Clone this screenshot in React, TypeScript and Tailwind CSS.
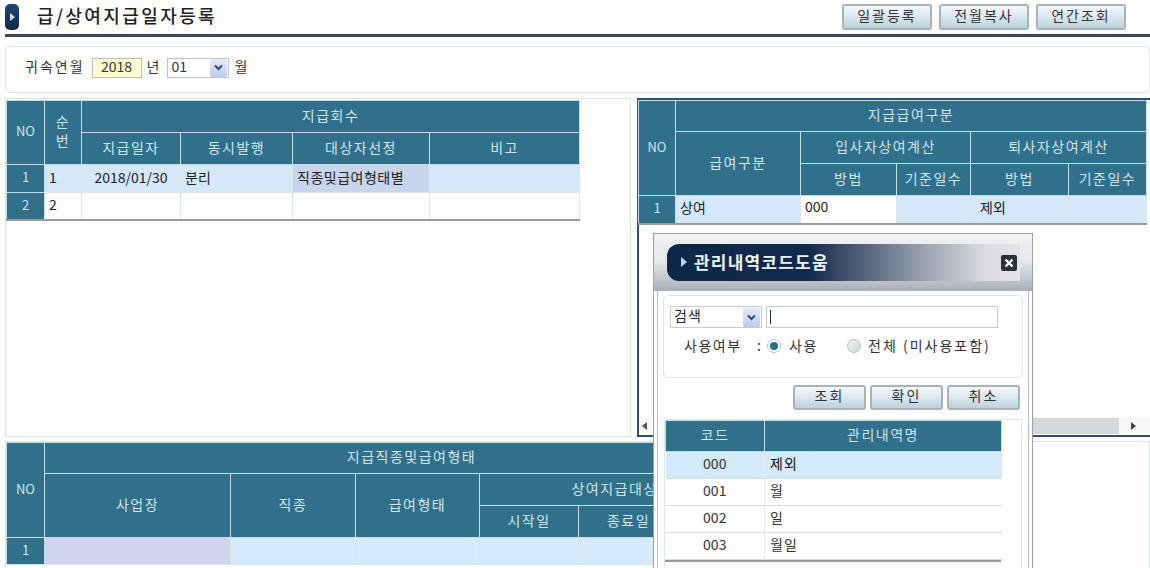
import * as React from "react"

const th = "border border-[#c5dde4] bg-[#31708b] text-center align-middle font-normal text-[#cfe6ee] p-0 pb-[3px] tracking-[1.5px] overflow-hidden whitespace-nowrap"
const thNo = "border border-[#c5dde4] bg-[#31708b] text-center align-middle font-normal text-[13px] text-[#cfe6ee] p-0 pb-[3px] overflow-hidden whitespace-nowrap"
const td = "border border-[#dfe6e6] px-1 pb-[3px] align-middle text-[#222] whitespace-nowrap overflow-hidden"
const no = "border border-[#c5dde4] bg-[#31708b] text-center text-[13px] text-[#cfe6ee] p-0 pb-[3px]"
const btn = "flex items-center justify-center rounded-[3px] border-2 border-[#a5b4bf] bg-gradient-to-b from-[#f4f8fb] via-[#dbe7ef] to-[#bdd0dc] pb-[4px] text-[#333] tracking-[2px]"

function Chevron() {
  return (
    <span className="flex h-full w-[17px] items-center justify-center rounded-[2px] bg-gradient-to-b from-[#e6eefb] to-[#b9cbee]">
      <svg width="9" height="7" viewBox="0 0 9 7">
        <path d="M1 1.5 L4.5 5 L8 1.5" fill="none" stroke="#2f4a78" strokeWidth="2" />
      </svg>
    </span>
  )
}

function PayTable() {
  return (
    <table className="table-fixed border-collapse w-[573px] mt-[1px]">
      <colgroup>
        <col className="w-[38px]" />
        <col className="w-[37px]" />
        <col className="w-[99px]" />
        <col className="w-[112px]" />
        <col className="w-[137px]" />
        <col className="w-[150px]" />
      </colgroup>
      <thead>
        <tr className="h-[32px]">
          <th rowSpan={2} className={thNo}>NO</th>
          <th rowSpan={2} className={th + " leading-[19px]"}>순<br />번</th>
          <th colSpan={4} className={th}>지급회수</th>
        </tr>
        <tr className="h-[32px]">
          <th className={th}>지급일자</th>
          <th className={th}>동시발행</th>
          <th className={th}>대상자선정</th>
          <th className={th}>비고</th>
        </tr>
      </thead>
      <tbody>
        <tr className="h-[28px] bg-[#d5e8fa]">
          <td className={no}>1</td>
          <td className={td}>1</td>
          <td className={td + " text-center"}>2018/01/30</td>
          <td className={td}>분리</td>
          <td className={td + " bg-[#c8d5ec] tracking-[0.5px]"}>직종및급여형태별</td>
          <td className={td}></td>
        </tr>
        <tr className="h-[27px] border-b-2 border-[#9a9a9a]">
          <td className={no}>2</td>
          <td className={td}>2</td>
          <td className={td}></td>
          <td className={td}></td>
          <td className={td}></td>
          <td className={td}></td>
        </tr>
      </tbody>
    </table>
  )
}

function KindTable() {
  return (
    <table className="table-fixed border-collapse w-[508px] -ml-px">
      <colgroup>
        <col className="w-[37px]" />
        <col className="w-[125px]" />
        <col className="w-[96px]" />
        <col className="w-[74px]" />
        <col className="w-[98px]" />
        <col className="w-[78px]" />
      </colgroup>
      <thead>
        <tr className="h-[31px]">
          <th rowSpan={3} className={thNo}>NO</th>
          <th colSpan={5} className={th}>지급급여구분</th>
        </tr>
        <tr className="h-[32px]">
          <th rowSpan={2} className={th}>급여구분</th>
          <th colSpan={2} className={th}>입사자상여계산</th>
          <th colSpan={2} className={th}>퇴사자상여계산</th>
        </tr>
        <tr className="h-[32px]">
          <th className={th}>방법</th>
          <th className={th}>기준일수</th>
          <th className={th}>방법</th>
          <th className={th}>기준일수</th>
        </tr>
      </thead>
      <tbody>
        <tr className="h-[28px] bg-[#d5e8fa] border-b-2 border-[#9a9a9a]">
          <td className={no}>1</td>
          <td className={td}>상여</td>
          <td className={td + " bg-white align-top"}>000</td>
          <td className={td}></td>
          <td className={td + " pl-[9px]"}>제외</td>
          <td className={td}></td>
        </tr>
      </tbody>
    </table>
  )
}

function StaffTable() {
  return (
    <table className="table-fixed border-collapse w-[772px]">
      <colgroup>
        <col className="w-[38px]" />
        <col className="w-[186px]" />
        <col className="w-[125px]" />
        <col className="w-[124px]" />
        <col className="w-[99px]" />
        <col className="w-[100px]" />
        <col className="w-[100px]" />
      </colgroup>
      <thead>
        <tr className="h-[31px]">
          <th rowSpan={3} className={thNo}>NO</th>
          <th colSpan={6} className={th}>지급직종및급여형태</th>
        </tr>
        <tr className="h-[32px]">
          <th rowSpan={2} className={th}>사업장</th>
          <th rowSpan={2} className={th}>직종</th>
          <th rowSpan={2} className={th}>급여형태</th>
          <th colSpan={3} className={th}>상여지급대상기간</th>
        </tr>
        <tr className="h-[32px]">
          <th className={th}>시작일</th>
          <th className={th}>종료일</th>
          <th className={th}></th>
        </tr>
      </thead>
      <tbody>
        <tr className="h-[27px] bg-[#d5ebfb]">
          <td className={no}>1</td>
          <td className={td + " bg-[#cdd6ee]"}></td>
          <td className={td}></td>
          <td className={td}></td>
          <td className={td}></td>
          <td className={td}></td>
          <td className={td}></td>
        </tr>
      </tbody>
    </table>
  )
}

function CodeDialog() {
  const rows = [
    { code: "000", name: "제외" },
    { code: "001", name: "월" },
    { code: "002", name: "일" },
    { code: "003", name: "월일" },
  ]
  return (
    <div className="absolute left-[653px] top-[233px] h-[345px] w-[380px] border border-[#9aa3ab] bg-[#fdfefd]">
      {/* title area */}
      <div className="h-[57px] bg-gradient-to-b from-[#eef0f2] via-[#e4e6e9] to-[#a9afb8] pl-[13px] pr-[12px] pt-[10px]">
        <div className="flex h-[37px] items-center justify-between rounded-l-[12px] bg-[linear-gradient(90deg,#0d2748_0%,#12294a_40%,#8f98a8_70%,#d9dbe0_90%,#e2e4e7_100%)] pl-[14px] pr-[3px]">
          <div className="flex items-center gap-[7px] pb-[2px]">
            <span className="h-0 w-0 border-y-[5px] border-l-[6px] border-y-transparent border-l-[#c5d6e6]" />
            <span className="text-[17px] font-bold tracking-[1.2px] text-[#eef3f8]">관리내역코드도움</span>
          </div>
          <span className="flex h-[16px] w-[16px] items-center justify-center rounded-[2px] bg-[#2b2f36]">
            <svg width="10" height="10" viewBox="0 0 10 10">
              <path d="M1.5 1.5 L8.5 8.5 M8.5 1.5 L1.5 8.5" stroke="#fff" strokeWidth="2.4" />
            </svg>
          </span>
        </div>
      </div>
      <div className="mx-[3px] border-x border-[#b9c0c6] px-[5px] pt-[4px]">
        {/* search box */}
        <div className="h-[83px] rounded-[5px] border border-[#dfe6ec] pl-[6px] pt-[10px]">
          <div className="flex gap-[4px]">
            <div className="flex h-[22px] w-[92px] items-center justify-between border border-[#c3cdd6] pl-[3px] pr-px text-[14px] tracking-[1px] text-[#222]">
              <span className="pb-[3px]">검색</span>
              <Chevron />
            </div>
            <div className="flex h-[22px] w-[232px] items-center border border-[#c3cdd6] bg-white pl-[3px]">
              <span className="h-[14px] w-px bg-[#222]" />
            </div>
          </div>
          <div className="mt-[7px] flex items-center pl-[14px] text-[#333] tracking-[1.5px]">
            <span className="w-[73px] whitespace-nowrap">사용여부 </span>
            <span className="w-[10px]">:</span>
            <span className="flex h-[14px] w-[14px] items-center justify-center rounded-full border border-[#b7c2c8] bg-white">
              <span className="h-[8px] w-[8px] rounded-full bg-[#2c6f8c]" />
            </span>
            <span className="ml-[8px] w-[58px]">사용</span>
            <span className="h-[14px] w-[14px] rounded-full border border-[#b7c2c8] bg-gradient-to-br from-[#f5f5f5] to-[#cfd4d6]" />
            <span className="ml-[7px] whitespace-nowrap tracking-[2px]">전체 (미사용포함)</span>
          </div>
        </div>
        {/* actions */}
        <div className="mt-[7px] flex justify-end gap-[4px] pr-[3px]">
          <button type="button" className={btn + " h-[25px] w-[73px]"}>조회</button>
          <button type="button" className={btn + " h-[25px] w-[73px]"}>확인</button>
          <button type="button" className={btn + " h-[25px] w-[73px]"}>취소</button>
        </div>
        {/* code list */}
        <div className="mt-[9px] ml-px w-[358px] border border-[#e0e6e8] pb-[8px]">
          <table className="table-fixed border-collapse w-[336px]">
            <colgroup>
              <col className="w-[99px]" />
              <col className="w-[237px]" />
            </colgroup>
            <thead>
              <tr className="h-[31px]">
                <th className={th}>코드</th>
                <th className={th}>관리내역명</th>
              </tr>
            </thead>
            <tbody>
              {rows.map((row, i) => (
                <tr key={row.code} className={(i === 0 ? "bg-[#d3eafa] " : "bg-[#fdfefe] ") + "h-[27px] border-b border-[#d8dcdc]"}>
                  <td className="border-r border-[#e4e8e8] pb-[3px] text-center text-[#333]">{row.code}</td>
                  <td className={"px-[5px] pb-[3px] tracking-[1px] " + (i === 0 ? "text-[#111]" : "text-[#333]")}>{row.name}</td>
                </tr>
              ))}
            </tbody>
          </table>
          <div className="h-[2px] w-[336px] bg-[#9a9a9a]" />
        </div>
      </div>
    </div>
  )
}

export default function App() {
  return (
    <div
      className="relative h-[568px] w-[1150px] overflow-hidden bg-[#fdfdfb] text-[14px] text-[#222]"
      style={{ fontFamily: '"Noto Sans CJK KR", "Liberation Sans", sans-serif' }}
    >
      {/* page title */}
      <div className="ml-[5px] flex h-[37px] items-end border-b-[3px] border-[#3d4858] pb-[2px]">
        <div className="mb-[2px] flex h-[26px] w-[14px] items-center justify-center rounded-[5px] bg-gradient-to-b from-[#22456b] to-[#10294a]">
          <span className="h-0 w-0 border-y-[4px] border-l-[5px] border-y-transparent border-l-[#cfe0ef]" />
        </div>
        <h1 className="mb-[7px] ml-[18px] whitespace-nowrap text-[18px] font-medium leading-[20px] tracking-[2.4px] text-[#222]">급/상여지급일자등록</h1>
        <div className="ml-auto mb-[2px] flex gap-[7px] pr-[24px] text-[14px]">
          <button type="button" className={btn + " h-[26px] w-[90px]"}>일괄등록</button>
          <button type="button" className={btn + " h-[26px] w-[90px]"}>전월복사</button>
          <button type="button" className={btn + " h-[26px] w-[90px]"}>연간조회</button>
        </div>
      </div>

      {/* search bar */}
      <div className="ml-[5px] mt-[9px] flex h-[47px] items-center rounded-[5px] border border-[#e3e7ea] pb-[4px] pl-[19px] tracking-[2px] text-[#333]">
        <span className="pb-[3px]">귀속연월</span>
        <span className="ml-[7px] flex h-[20px] w-[50px] items-center justify-center border border-[#bcbcb4] bg-[#fffed2] pb-[3px] tracking-normal">2018</span>
        <span className="ml-[5px] pb-[3px]">년</span>
        <div className="ml-[6px] flex h-[20px] w-[62px] items-center justify-between border border-[#bfc3c8] bg-white pl-[3px] pr-px tracking-normal">
          <span className="pb-[3px]">01</span>
          <Chevron />
        </div>
        <span className="ml-[5px] pb-[3px]">월</span>
      </div>

      {/* master tables */}
      <div className="mt-[5px] flex h-[339px] pl-[1px]">
        <div className="ml-[4px] h-full w-[626px] border border-[#d4e9de]">
          <PayTable />
        </div>
        <div className="relative ml-[6px] h-full flex-1 border-2 border-r-0 border-[#2c4f78]">
          <KindTable />
          <div className="absolute bottom-[1px] left-0 right-0 flex h-[17px] items-center bg-[#f7f8f8]">
            <span className="ml-[3px] h-0 w-0 border-y-[4px] border-r-[5px] border-y-transparent border-r-[#555]" />
            <span className="ml-[8px] h-[16px] w-[464px] bg-[#d6d9db]" />
            <span className="ml-[12px] h-0 w-0 border-y-[4px] border-l-[5px] border-y-transparent border-l-[#444]" />
          </div>
        </div>
      </div>

      {/* detail table */}
      <div className="ml-[5px] mt-[4px] h-[131px] overflow-hidden border border-[#d4e9de]">
        <StaffTable />
      </div>

      <CodeDialog />
    </div>
  )
}
